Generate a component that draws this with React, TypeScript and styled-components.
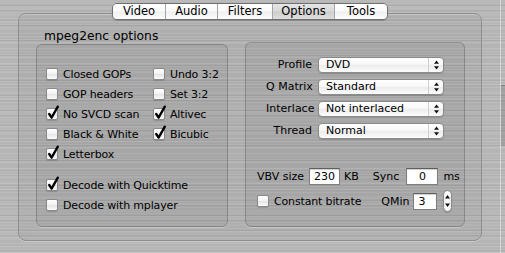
import styled, { createGlobalStyle } from 'styled-components';

const GlobalStyle = createGlobalStyle`
  html, body {
    margin: 0;
    padding: 0;
  }
  body {
    background-color: #b5b5b5;
    background-image:
      repeating-linear-gradient(180deg, rgba(255, 255, 255, 0.1) 0 1px, transparent 1px 3px),
      repeating-linear-gradient(180deg, rgba(0, 0, 0, 0.05) 0 1px, transparent 1px 5px),
      repeating-linear-gradient(180deg, rgba(255, 255, 255, 0.07) 0 2px, transparent 2px 7px);
    font-family: 'DejaVu Sans', 'Lucida Grande', sans-serif;
    color: #000;
  }
`;

const Window = styled.div`
  display: flex;
  height: 253px;
  width: 505px;
  overflow: hidden;
`;

const Main = styled.div`
  display: flex;
  flex-direction: column;
  width: 464px;
  margin-left: 18px;
  padding-top: 3px;
`;

const SideStrip = styled.div`
  margin-left: 18px;
  width: 4px;
  border-left: 1px solid rgba(255, 255, 255, 0.45);
  padding-top: 85px;
`;

const SideThumb = styled.div`
  height: 60px;
  background: rgba(0, 0, 0, 0.12);
  border-top: 1px solid rgba(0, 0, 0, 0.15);
  border-bottom: 1px solid rgba(255, 255, 255, 0.3);
`;

const TabBar = styled.div`
  align-self: center;
  display: flex;
  height: 17px;
  box-sizing: border-box;
  border: 1px solid #707070;
  border-radius: 5px;
  overflow: hidden;
  position: relative;
  z-index: 1;
  margin-bottom: -7px;
  box-shadow: 0 1px 1px rgba(0, 0, 0, 0.18);
`;

const Tab = styled.div<{ $w: number; $active?: boolean }>`
  width: ${(p) => p.$w}px;
  font-size: 11.5px;
  line-height: 15px;
  text-align: center;
  background: ${(p) =>
    p.$active
      ? 'linear-gradient(180deg, #e6e6e6 0%, #d9d9d9 48%, #cdcdcd 52%, #dedede 100%)'
      : 'linear-gradient(180deg, #ffffff 0%, #fafafa 48%, #efefef 52%, #fdfdfd 100%)'};
  & + & {
    border-left: 1px solid #a6a6a6;
  }
`;

const OuterBox = styled.div`
  height: 228px;
  box-sizing: border-box;
  border: 1px solid #8e8e8e;
  border-radius: 8px;
  background: rgba(0, 0, 0, 0.035);
  box-shadow: inset 0 1px 0 rgba(255, 255, 255, 0.25), 0 1px 0 rgba(255, 255, 255, 0.3);
  padding: 14px 16px 13px 17px;
  display: flex;
  gap: 17px;
`;

const LeftColumn = styled.div`
  width: 192px;
  display: flex;
  flex-direction: column;
`;

const Title = styled.div`
  font-size: 12.3px;
  line-height: 16px;
  padding-left: 8px;
`;

const GroupBox = styled.div`
  box-sizing: border-box;
  border: 1px solid rgba(0, 0, 0, 0.2);
  border-radius: 6px;
  background: rgba(0, 0, 0, 0.045);
  box-shadow: 0 1px 0 rgba(255, 255, 255, 0.3);
`;

const LeftBox = styled(GroupBox)`
  flex: 1;
  padding: 19px 0 0 9px;
`;

const RightBox = styled(GroupBox)`
  width: 220px;
  margin-top: 14px;
  padding: 14px 20px 0 11px;
`;

const CheckGrid = styled.div<{ $gapTop?: number }>`
  display: grid;
  grid-template-columns: 107px auto;
  grid-auto-rows: 20px;
  margin-top: ${(p) => p.$gapTop ?? 0}px;
`;

const CheckRow = styled.label`
  display: flex;
  align-items: center;
  gap: 5px;
  font-size: 11px;
  letter-spacing: -0.15px;
  white-space: nowrap;
`;

const Box = styled.span`
  position: relative;
  width: 12px;
  height: 12px;
  box-sizing: border-box;
  border: 1px solid #8a8a8a;
  border-radius: 2px;
  background: linear-gradient(180deg, #ffffff 0%, #f2f2f2 50%, #e6e6e6 55%, #fbfbfb 100%);
  box-shadow: 0 1px 1px rgba(0, 0, 0, 0.15);
  flex-shrink: 0;
`;

const CheckMark = styled.svg`
  position: absolute;
  left: 0;
  top: -4px;
`;

const Checkbox = ({ label, checked }: { label: string; checked?: boolean }) => (
  <CheckRow>
    <Box>
      {checked && (
        <CheckMark width="13" height="15" viewBox="0 0 13 15">
          <path d="M2.2 9 L4.6 12.6 L10.8 1.6" fill="none" stroke="#000" strokeWidth="2.3" strokeLinecap="round" strokeLinejoin="round" />
        </CheckMark>
      )}
    </Box>
    {label}
  </CheckRow>
);

const SelectGrid = styled.div`
  display: grid;
  grid-template-columns: 46px 126px;
  grid-auto-rows: 16px;
  column-gap: 6px;
  row-gap: 6px;
  padding-left: 9px;
  font-size: 11px;
`;

const FieldName = styled.div`
  text-align: right;
  line-height: 16px;
  white-space: nowrap;
`;

const Select = styled.div`
  display: flex;
  box-sizing: border-box;
  height: 16px;
  border: 1px solid #8a8a8a;
  border-radius: 4px;
  background: linear-gradient(180deg, #ffffff 0%, #f8f8f8 45%, #ececec 52%, #fcfcfc 100%);
  box-shadow: 0 1px 1px rgba(0, 0, 0, 0.15);
`;

const SelectText = styled.div`
  flex: 1;
  padding-left: 7px;
  line-height: 14px;
`;

const SelectArrows = styled.div`
  width: 14px;
  border-left: 1px solid #d0d0d0;
  display: flex;
  align-items: center;
  justify-content: center;
`;

const Arrows = () => (
  <svg width="7" height="10" viewBox="0 0 7 10">
    <path d="M3.5 0.5 L6 3.8 L1 3.8 Z" fill="#111" />
    <path d="M3.5 9.5 L6 6.2 L1 6.2 Z" fill="#111" />
  </svg>
);

const Popup = ({ value }: { value: string }) => (
  <Select>
    <SelectText>{value}</SelectText>
    <SelectArrows>
      <Arrows />
    </SelectArrows>
  </Select>
);

const FieldRow = styled.div<{ $h: number; $mt: number }>`
  display: flex;
  align-items: center;
  height: ${(p) => p.$h}px;
  margin-top: ${(p) => p.$mt}px;
  font-size: 11px;
  white-space: nowrap;
`;

const Text = styled.span<{ $ml?: number }>`
  margin-left: ${(p) => p.$ml ?? 0}px;
`;

const NumberInput = styled.input<{ $w: number; $ml: number; $align: string }>`
  width: ${(p) => p.$w}px;
  height: 17px;
  margin: 0 0 0 ${(p) => p.$ml}px;
  box-sizing: border-box;
  border: 1px solid #7e7e7e;
  border-top-color: #5e5e5e;
  box-shadow: inset 0 1px 1px rgba(0, 0, 0, 0.2);
  background: #fff;
  font-family: inherit;
  font-size: 11px;
  text-align: ${(p) => p.$align};
  padding: 0 4px;
  color: #000;
  outline: none;
`;

const Stepper = styled.div`
  margin-left: 6px;
  width: 13px;
  height: 22px;
  box-sizing: border-box;
  border: 1px solid #8a8a8a;
  border-radius: 6px;
  background: linear-gradient(90deg, #f0f0f0 0%, #ffffff 50%, #ececec 100%);
  box-shadow: 0 1px 1px rgba(0, 0, 0, 0.15);
  display: flex;
  align-items: center;
  justify-content: center;
`;

const StepperArrows = () => (
  <svg width="7" height="14" viewBox="0 0 7 14">
    <path d="M3.5 1 L6 4.5 L1 4.5 Z" fill="#111" />
    <path d="M3.5 13 L6 9.5 L1 9.5 Z" fill="#111" />
  </svg>
);

const tabs = [
  { name: 'Video', w: 52 },
  { name: 'Audio', w: 51 },
  { name: 'Filters', w: 54 },
  { name: 'Options', w: 61 },
  { name: 'Tools', w: 52 },
];

const App = () => {
  return (
    <>
      <GlobalStyle />
      <Window>
        <Main>
          <TabBar>
            {tabs.map((t) => (
              <Tab key={t.name} $w={t.w} $active={t.name === 'Options'}>
                {t.name}
              </Tab>
            ))}
          </TabBar>
          <OuterBox>
            <LeftColumn>
              <Title>mpeg2enc options</Title>
              <LeftBox>
                <CheckGrid>
                  <Checkbox label="Closed GOPs" />
                  <Checkbox label="Undo 3:2" />
                  <Checkbox label="GOP headers" />
                  <Checkbox label="Set 3:2" />
                  <Checkbox label="No SVCD scan" checked />
                  <Checkbox label="Altivec" checked />
                  <Checkbox label="Black & White" />
                  <Checkbox label="Bicubic" checked />
                  <Checkbox label="Letterbox" checked />
                </CheckGrid>
                <CheckGrid $gapTop={11}>
                  <Checkbox label="Decode with Quicktime" checked />
                  <span />
                  <Checkbox label="Decode with mplayer" />
                </CheckGrid>
              </LeftBox>
            </LeftColumn>
            <RightBox>
              <SelectGrid>
                <FieldName>Profile</FieldName>
                <Popup value="DVD" />
                <FieldName>Q Matrix</FieldName>
                <Popup value="Standard" />
                <FieldName>Interlace</FieldName>
                <Popup value="Not interlaced" />
                <FieldName>Thread</FieldName>
                <Popup value="Normal" />
              </SelectGrid>
              <FieldRow $h={17} $mt={29}>
                <Text>VBV size</Text>
                <NumberInput $w={31} $ml={5} $align="right" defaultValue="230" />
                <Text $ml={4}>KB</Text>
                <Text $ml={14}>Sync</Text>
                <NumberInput $w={32} $ml={7} $align="center" defaultValue="0" />
                <Text $ml={5}>ms</Text>
              </FieldRow>
              <FieldRow $h={22} $mt={5}>
                <Checkbox label="Constant bitrate" />
                <Text $ml={20}>QMin</Text>
                <NumberInput $w={24} $ml={4} $align="left" defaultValue="3" />
                <Stepper>
                  <StepperArrows />
                </Stepper>
              </FieldRow>
            </RightBox>
          </OuterBox>
        </Main>
        <SideStrip>
          <SideThumb />
        </SideStrip>
      </Window>
    </>
  );
};

export default App;
